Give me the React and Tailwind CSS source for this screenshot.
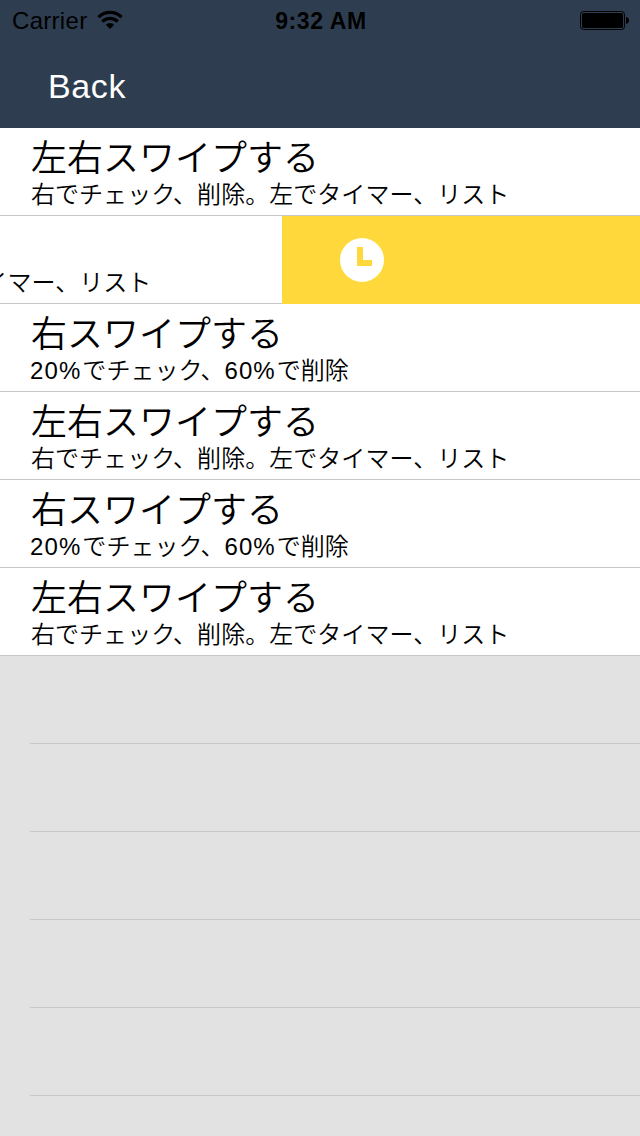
const BOTH = {
  title: '左右スワイプする',
  detail: ['右でチェック、削除。左でタイマー、リスト'],
}

const RIGHT = {
  title: '右スワイプする',
  detail: ['20%', 'でチェック、', '60%', 'で削除'],
}

const ROWS = [BOTH, { ...BOTH, swiped: true }, RIGHT, BOTH, RIGHT, BOTH]

function WifiIcon() {
  return (
    <svg className="w-[26px] h-5 mb-px" viewBox="0 0 26 20" fill="none" stroke="#000" strokeWidth="3.2">
      <path d="M1.4 7.2a16.6 16.6 0 0 1 23.2 0" />
      <path d="M5.3 11.6a11 11 0 0 1 15.4 0" />
      <path d="M13 19l-4.2-4.2a5.9 5.9 0 0 1 8.4 0z" fill="#000" stroke="none" />
    </svg>
  )
}

function BatteryIcon() {
  return (
    <svg className="w-[50px] h-5 mb-px" viewBox="0 0 50 20">
      <rect x="0.5" y="1.5" width="44" height="18" rx="3" fill="none" stroke="#000" />
      <rect x="2" y="3" width="41" height="15" rx="1.5" fill="#000" />
      <path d="M46 7q3 0.6 3 3.5t-3 3.5z" fill="#000" />
    </svg>
  )
}

function ClockIcon() {
  return (
    <svg className="w-11 h-11" viewBox="0 0 44 44">
      <circle cx="22" cy="22" r="22" fill="#fff" />
      <path d="M17 9h6v13h9v6H17z" fill="#ffd93b" />
    </svg>
  )
}

function StatusBar() {
  return (
    <div className="grid grid-cols-3 items-center h-10 pl-3 pr-[10px] text-black">
      <div className="flex items-center gap-[10px]">
        <span className="text-2xl leading-10 tracking-[0.3px] pt-px">Carrier</span>
        <WifiIcon />
      </div>
      <span className="text-center text-[23px] leading-10 font-bold tracking-[0.6px] pt-px">9:32 AM</span>
      <div className="flex justify-end">
        <BatteryIcon />
      </div>
    </div>
  )
}

function RowText({ title, detail }) {
  return (
    <div className="w-[640px] shrink-0 h-[88px] pl-[30px] pt-[11px] border-b border-[#c8c7cc] bg-white text-black whitespace-nowrap">
      <p className="pl-px text-4xl leading-[40px] font-[350]">{title}</p>
      <p className="text-2xl leading-[32px] font-[350] tracking-[0.04px]">
        {detail.map((part, i) => (
          <span key={i} className={part.endsWith('%') ? 'tracking-[1.1px]' : 'pl-px'}>{part}</span>
        ))}
      </p>
    </div>
  )
}

function Row({ title, detail, swiped }) {
  return (
    <li className="flex h-[88px] overflow-hidden">
      <div className={swiped ? 'flex -ml-[358px]' : 'flex'}>
        <RowText title={title} detail={detail} />
        {swiped && (
          <div className="flex items-center w-[358px] pl-[58px] bg-[#ffd93b]">
            <ClockIcon />
          </div>
        )}
      </div>
    </li>
  )
}

export default function App() {
  return (
    <div className="w-[640px] h-[1136px] overflow-hidden bg-[#e2e2e2] font-['Liberation_Sans','Noto_Sans_CJK_JP',sans-serif]">
      <header className="h-32 bg-[#2e3e50]">
        <StatusBar />
        <button className="block pl-12 text-[34px] leading-[92px] tracking-[0.6px] text-white">Back</button>
      </header>

      <ul>
        {ROWS.map((row, i) => (
          <Row key={i} {...row} />
        ))}
      </ul>

      {/* empty cells below the list */}
      <div className="pl-[30px]">
        {Array.from({ length: 5 }).map((_, i) => (
          <div key={i} className="h-[88px] border-b border-[#c8c8c8]" />
        ))}
      </div>
    </div>
  )
}
